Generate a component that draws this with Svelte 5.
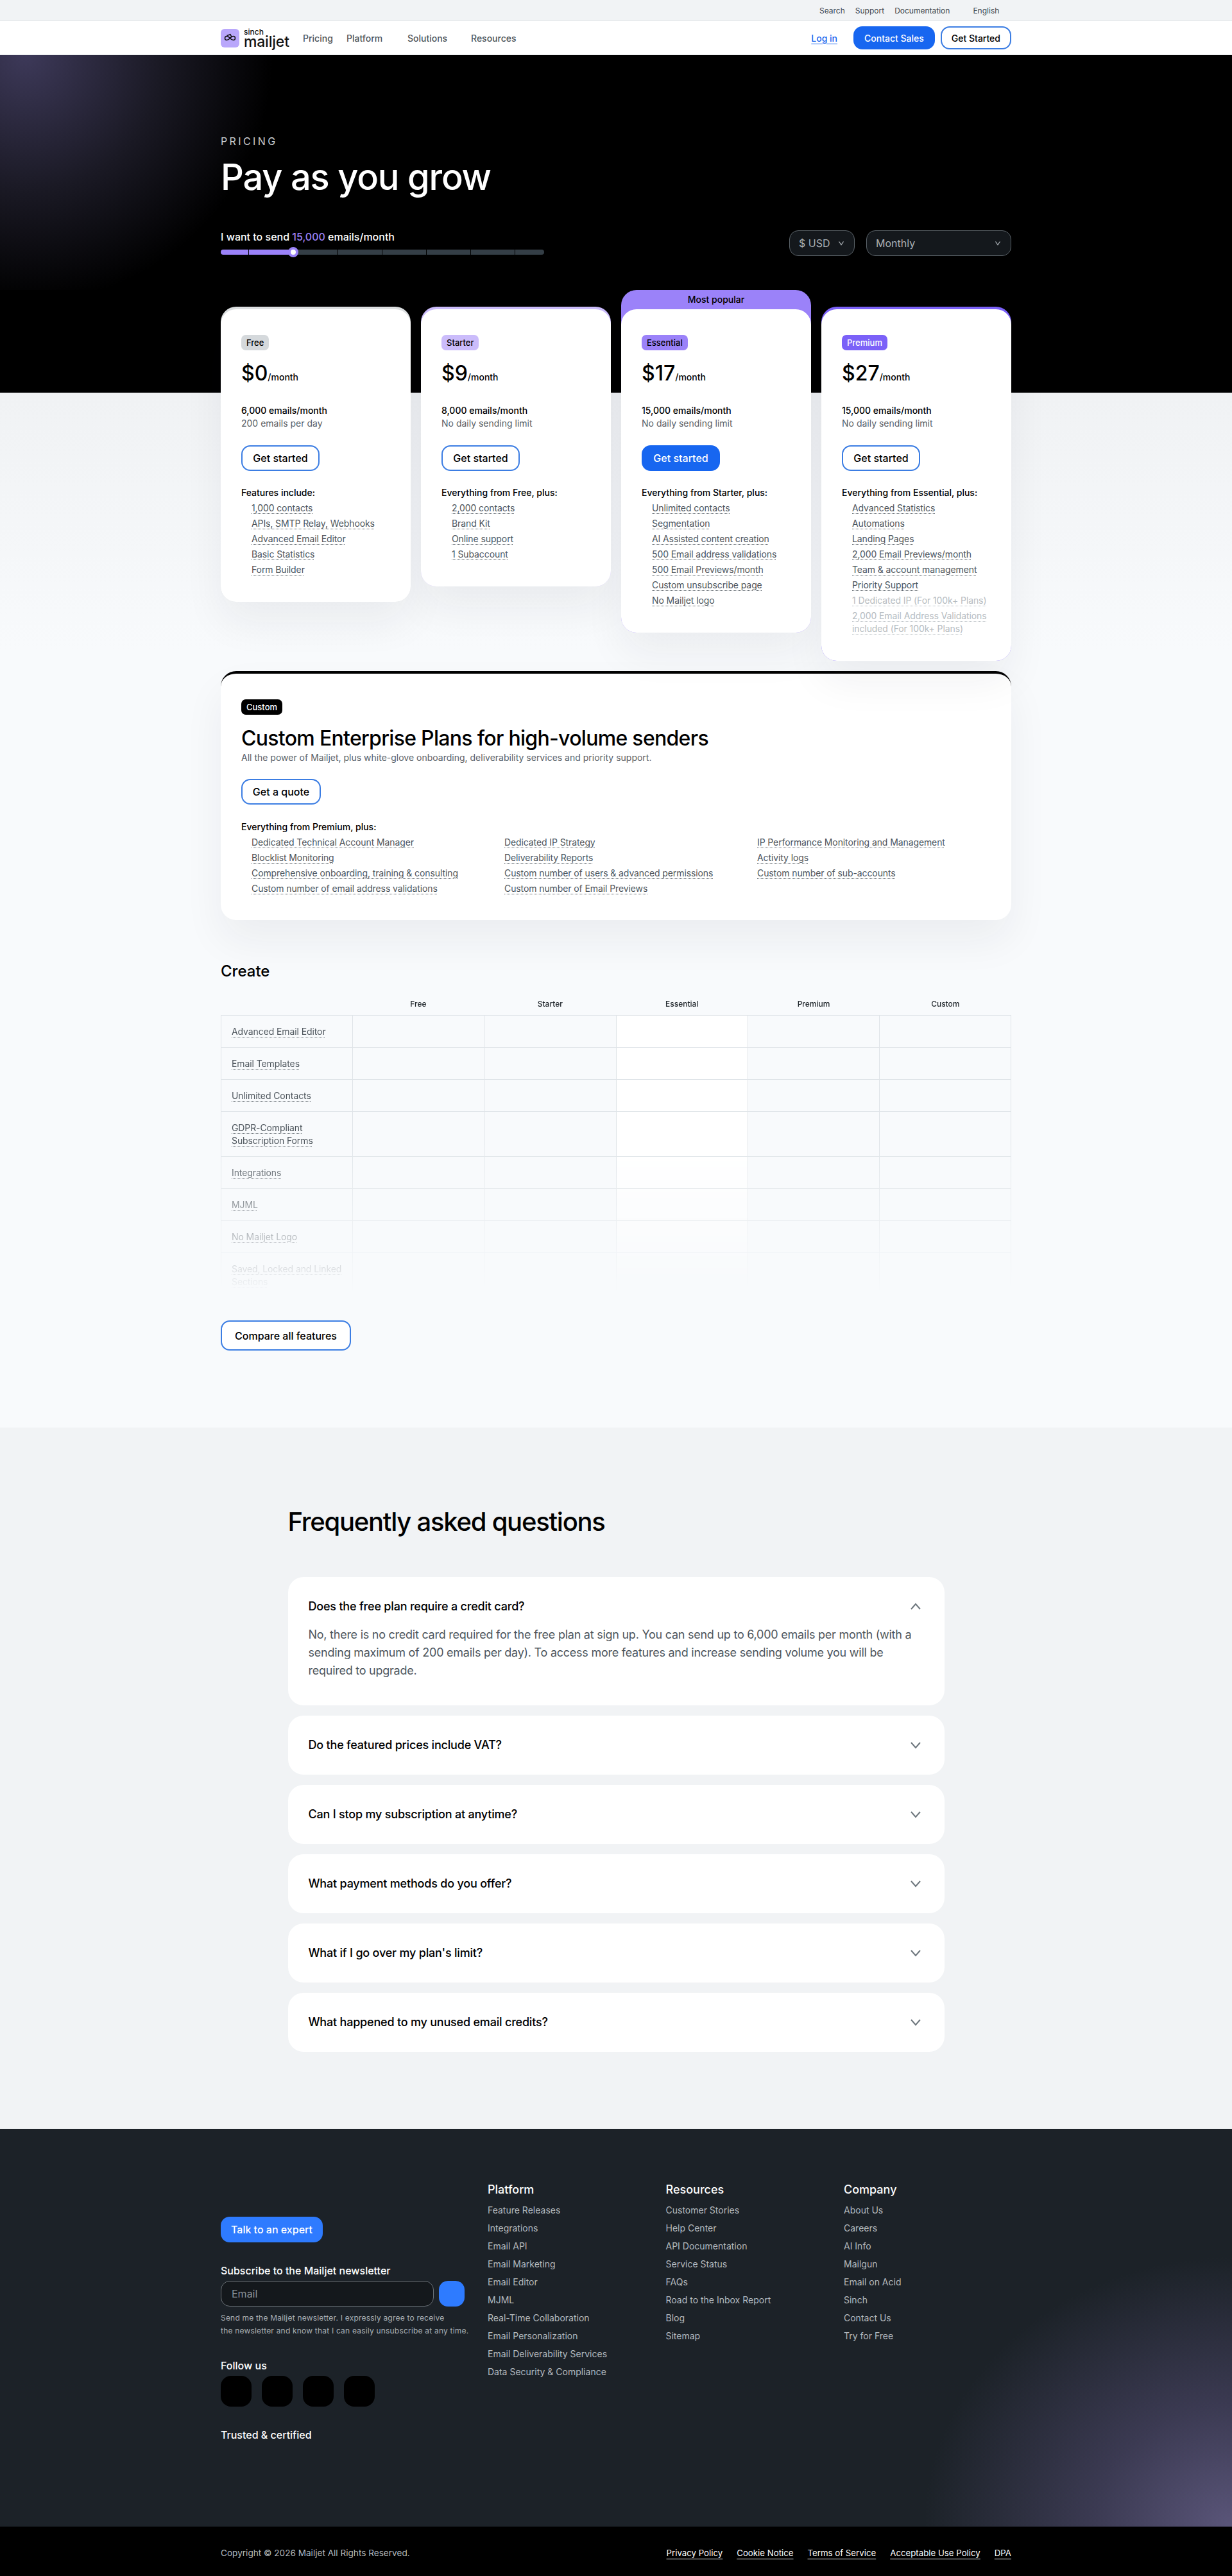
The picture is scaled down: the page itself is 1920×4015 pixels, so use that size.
<script>
  const plans = [
    { name: 'Free', tone: 'free', price: '$0', volume: '6,000 emails/month', limit: '200 emails per day', title: 'Features include:', features: ['1,000 contacts', 'APIs, SMTP Relay, Webhooks', 'Advanced Email Editor', 'Basic Statistics', 'Form Builder'] },
    { name: 'Starter', tone: 'starter', price: '$9', volume: '8,000 emails/month', limit: 'No daily sending limit', title: 'Everything from Free, plus:', features: ['2,000 contacts', 'Brand Kit', 'Online support', '1 Subaccount'] },
    { name: 'Essential', tone: 'essential', popular: true, price: '$17', volume: '15,000 emails/month', limit: 'No daily sending limit', title: 'Everything from Starter, plus:', features: ['Unlimited contacts', 'Segmentation', 'AI Assisted content creation', '500 Email address validations', '500 Email Previews/month', 'Custom unsubscribe page', 'No Mailjet logo'] },
    { name: 'Premium', tone: 'premium', price: '$27', volume: '15,000 emails/month', limit: 'No daily sending limit', title: 'Everything from Essential, plus:', features: ['Advanced Statistics', 'Automations', 'Landing Pages', '2,000 Email Previews/month', 'Team & account management', 'Priority Support'], muted: ['1 Dedicated IP (For 100k+ Plans)', '2,000 Email Address Validations included (For 100k+ Plans)'] },
  ];

  const customFeatures = [
    'Dedicated Technical Account Manager', 'Dedicated IP Strategy', 'IP Performance Monitoring and Management',
    'Blocklist Monitoring', 'Deliverability Reports', 'Activity logs',
    'Comprehensive onboarding, training & consulting', 'Custom number of users & advanced permissions', 'Custom number of sub-accounts',
    'Custom number of email address validations', 'Custom number of Email Previews',
  ];

  const tiers = ['Free', 'Starter', 'Essential', 'Premium', 'Custom'];
  const rows = ['Advanced Email Editor', 'Email Templates', 'Unlimited Contacts', 'GDPR-Compliant Subscription Forms', 'Integrations', 'MJML', 'No Mailjet Logo', 'Saved, Locked and Linked Sections'];
  const stops = [44, 69, 69, 70, 69, 69, 69, 45];

  const faqs = [
    { q: 'Does the free plan require a credit card?', a: 'No, there is no credit card required for the free plan at sign up. You can send up to 6,000 emails per month (with a sending maximum of 200 emails per day). To access more features and increase sending volume you will be required to upgrade.' },
    { q: 'Do the featured prices include VAT?' },
    { q: 'Can I stop my subscription at anytime?' },
    { q: 'What payment methods do you offer?' },
    { q: 'What if I go over my plan\'s limit?' },
    { q: 'What happened to my unused email credits?' },
  ];

  const footerColumns = [
    { title: 'Platform', links: ['Feature Releases', 'Integrations', 'Email API', 'Email Marketing', 'Email Editor', 'MJML', 'Real-Time Collaboration', 'Email Personalization', 'Email Deliverability Services', 'Data Security & Compliance'] },
    { title: 'Resources', links: ['Customer Stories', 'Help Center', 'API Documentation', 'Service Status', 'FAQs', 'Road to the Inbox Report', 'Blog', 'Sitemap'] },
    { title: 'Company', links: ['About Us', 'Careers', 'AI Info', 'Mailgun', 'Email on Acid', 'Sinch', 'Contact Us', 'Try for Free'] },
  ];

  const legal = ['Privacy Policy', 'Cookie Notice', 'Terms of Service', 'Acceptable Use Policy', 'DPA'];
</script>

<div class="topbar">
  <a href="#search">Search</a>
  <a href="#support">Support</a>
  <a href="#docs">Documentation</a>
  <a class="lang" href="#lang">English</a>
</div>

<nav class="nav">
  <a class="logo" href="#home">
    <svg class="mark" width="29" height="29" viewBox="0 0 29 29">
      <rect width="29" height="29" rx="6" fill="#b9a7fb"/>
      <path d="M14.5 14.5c-1.800-2.100-3.300-3-5-3a3 3 0 0 0 0 6c1.700 0 3.200-.9 5-3s3.300-3 5-3a3 3 0 0 1 0 6c-1.700 0-3.200-.9-5-3z" fill="none" stroke="#111" stroke-width="1.500"/>
      <path d="M9.500 10.500l5.500-1.800 2 4" fill="none" stroke="#111" stroke-width="1.500"/>
    </svg>
    <span class="wordmark"><small>sinch</small><b>mailjet</b></span>
  </a>
  <div class="nav-links">
    <a href="#pricing" style="width:68px">Pricing</a>
    <a href="#platform" style="width:95px">Platform</a>
    <a href="#solutions" style="width:99px">Solutions</a>
    <a href="#resources">Resources</a>
  </div>
  <div class="nav-actions">
    <a class="login" href="#login">Log in</a>
    <a class="btn solid nav-btn" href="#sales">Contact Sales</a>
    <a class="btn nav-btn" href="#start">Get Started</a>
  </div>
</nav>

<header class="hero">
  <p class="eyebrow">PRICING</p>
  <h1>Pay as you grow</h1>
  <div class="controls">
    <div class="volume">
      <p>I want to send <em>15,000</em> emails/month</p>
      <div class="track">
        {#each stops as w, i}
          <span class:on={i < 2} style="width:{w}px"></span>
        {/each}
        <i class="thumb"></i>
      </div>
    </div>
    <div class="selects">
      <div class="select currency">
        <span>$ USD</span>
        <svg width="12" height="12" viewBox="0 0 12 12"><path d="M2.500 3.500l3.500 5 3.500-5" fill="none" stroke="#aab0b5" stroke-width="1.300"/></svg>
      </div>
      <div class="select period">
        <span>Monthly</span>
        <svg width="12" height="12" viewBox="0 0 12 12"><path d="M2.500 3.500l3.500 5 3.500-5" fill="none" stroke="#aab0b5" stroke-width="1.300"/></svg>
      </div>
    </div>
  </div>
</header>

<main class="plans-section">
  <div class="plans">
    {#each plans as plan}
      <article class="plan {plan.tone}">
        {#if plan.popular}<div class="popular">Most popular</div>{/if}
        <div class="plan-body">
          <span class="badge">{plan.name}</span>
          <p class="price">{plan.price}<small>/month</small></p>
          <p class="volume-line">{plan.volume}</p>
          <p class="limit">{plan.limit}</p>
          <a class="btn plan-btn" class:solid={plan.popular} href="#start">Get started</a>
          <p class="feat-title">{plan.title}</p>
          <ul class="feats">
            {#each plan.features as f}
              <li><span>{f}</span></li>
            {/each}
            {#each plan.muted ?? [] as f}
              <li class="faded"><span>{f}</span></li>
            {/each}
          </ul>
        </div>
      </article>
    {/each}
  </div>

  <section class="custom">
    <span class="badge black">Custom</span>
    <h2>Custom Enterprise Plans for high-volume senders</h2>
    <p class="limit">All the power of Mailjet, plus white-glove onboarding, deliverability services and priority support.</p>
    <a class="btn quote" href="#quote">Get a quote</a>
    <p class="feat-title custom-title">Everything from Premium, plus:</p>
    <ul class="feats custom-feats">
      {#each customFeatures as f}
        <li><span>{f}</span></li>
      {/each}
    </ul>
  </section>

  <section class="compare">
    <h3>Create</h3>
    <div class="table">
      <div class="row head">
        <div></div>
        {#each tiers as t}<div>{t}</div>{/each}
      </div>
      {#each rows as r}
        <div class="row">
          <div class="label"><span>{r}</span></div>
          {#each tiers as t}<div class="cell" class:hl={t === 'Essential'}></div>{/each}
        </div>
      {/each}
    </div>
    <a class="btn compare-btn" href="#compare">Compare all features</a>
  </section>
</main>

<section class="faq">
  <h2>Frequently asked questions</h2>
  {#each faqs as item}
    <div class="faq-item">
      <div class="faq-q">
        <span>{item.q}</span>
        <svg class:up={item.a} width="18" height="12" viewBox="0 0 18 12"><path d="M2 2l7 8 7-8" fill="none" stroke="#6d767d" stroke-width="2"/></svg>
      </div>
      {#if item.a}<p class="faq-a">{item.a}</p>{/if}
    </div>
  {/each}
</section>

<footer class="footer">
  <div class="foot-left">
    <a class="btn solid talk" href="#expert">Talk to an expert</a>
    <h4>Subscribe to the Mailjet newsletter</h4>
    <div class="subscribe">
      <input type="text" placeholder="Email" />
      <button aria-label="Subscribe"></button>
    </div>
    <p class="note">Send me the Mailjet newsletter. I expressly agree to receive<br />the newsletter and know that I can easily unsubscribe at any time.</p>
    <h4 class="gap">Follow us</h4>
    <div class="socials">
      <span></span><span></span><span></span><span></span>
    </div>
    <h4 class="gap">Trusted &amp; certified</h4>
  </div>
  {#each footerColumns as col}
    <div class="foot-col">
      <h5>{col.title}</h5>
      {#each col.links as l}<a href="#link">{l}</a>{/each}
    </div>
  {/each}
</footer>

<div class="legal">
  <span class="copy">Copyright © 2026 Mailjet All Rights Reserved.</span>
  <div class="legal-links">
    {#each legal as l}<a href="#legal">{l}</a>{/each}
  </div>
</div>

<style>
  :global(body) {
    margin: 0;
    font-family: Inter, "Liberation Sans", sans-serif;
    color: #000;
    background: #f8fafc;
  }

  a {
    color: inherit;
    text-decoration: none;
  }

  p, h1, h2, h3, h4, h5, ul {
    margin: 0;
    padding: 0;
    font-weight: 500;
  }

  ul {
    list-style: none;
  }

  .topbar {
    height: 32px;
    background: #f1f3f5;
    border-bottom: 1px solid #dfe3e6;
    display: flex;
    align-items: center;
    padding-left: 1277px;
    font-size: 12px;
    color: #3f474d;
    gap: 16px;
  }

  .topbar .lang {
    margin-left: 20px;
  }

  .nav {
    height: 52px;
    background: #fff;
    border-bottom: 1px solid #dfe3e6;
    display: flex;
    align-items: center;
    padding: 0 344px;
  }

  .logo {
    display: flex;
    align-items: center;
    gap: 7px;
    width: 128px;
  }

  .wordmark {
    display: flex;
    flex-direction: column;
    line-height: 1;
    color: #111;
  }

  .wordmark small {
    font-size: 12px;
    font-weight: 500;
    line-height: 11px;
  }

  .wordmark b {
    font-size: 23px;
    font-weight: 500;
    line-height: 20px;
    letter-spacing: -0.2px;
  }

  .nav-links {
    display: flex;
    font-size: 14px;
    font-weight: 500;
    color: #4d555b;
  }

  .nav-actions {
    margin-left: auto;
    display: flex;
    align-items: center;
    gap: 9px;
  }

  .login {
    color: #1a66ee;
    font-size: 14px;
    font-weight: 500;
    text-decoration: underline;
    text-underline-offset: 3px;
    margin-right: 16px;
  }

  .btn {
    display: inline-flex;
    align-items: center;
    justify-content: center;
    box-sizing: border-box;
    height: 40px;
    border: 2px solid #3b7de3;
    border-radius: 14px;
    background: #fff;
    font-size: 16px;
    font-weight: 500;
    white-space: nowrap;
  }

  .btn.solid {
    background: #1766f0;
    border-color: #1766f0;
    color: #fff;
  }

  .nav-btn {
    height: 36px;
    font-size: 14px;
    border-radius: 14px;
    padding: 0 15px;
  }

  .hero {
    box-sizing: border-box;
    height: 526px;
    background: radial-gradient(circle 385px at 40px 0, #3d3959 0%, #1a1924 55%, #000 100%) no-repeat 0 0 / 100% 366px #000;
    padding: 122px 344px 0;
    color: #fff;
  }

  .eyebrow {
    font-size: 16px;
    font-weight: 400;
    line-height: 24px;
    letter-spacing: 3.400px;
    color: #c8ccd0;
  }

  h1 {
    font-size: 56px;
    font-weight: 500;
    line-height: 64px;
    margin-top: 12px;
    letter-spacing: -1.200px;
  }

  .controls {
    display: flex;
    justify-content: space-between;
    align-items: flex-start;
    margin-top: 49px;
  }

  .volume p {
    font-size: 16px;
    line-height: 24px;
  }

  .volume em {
    font-style: normal;
    color: #9b82f9;
  }

  .track {
    position: relative;
    display: flex;
    width: 504px;
    height: 8px;
    margin-top: 8px;
    border-radius: 4px;
    overflow: visible;
    gap: 0;
  }

  .track span {
    box-sizing: border-box;
    height: 8px;
    background: #343e46;
    border-right: 1px solid #000;
  }

  .track span.on {
    background: #9b82f9;
  }

  .track span:first-child {
    border-radius: 4px 0 0 4px;
  }

  .track span:last-of-type {
    border-radius: 0 4px 4px 0;
    border-right: 0;
  }

  .thumb {
    position: absolute;
    left: 105px;
    top: -4px;
    width: 8px;
    height: 8px;
    border: 4px solid #9b82f9;
    border-radius: 50%;
    background: #fff;
  }

  .selects {
    display: flex;
    gap: 18px;
    margin-top: 2px;
  }

  .select {
    box-sizing: border-box;
    height: 40px;
    display: flex;
    align-items: center;
    justify-content: space-between;
    padding: 0 14px;
    background: #14181c;
    border: 1px solid #5a6268;
    border-radius: 14px;
    color: #aab0b5;
    font-size: 16px;
  }

  .currency {
    width: 102px;
  }

  .period {
    width: 226px;
  }

  .plans-section {
    display: flow-root;
    background: linear-gradient(#f0f2f4 0, #f8fafc 400px) no-repeat #f8fafc;
    padding: 0 344px 120px;
  }

  .plans {
    display: grid;
    grid-template-columns: repeat(4, 296px);
    gap: 16px;
    align-items: start;
    margin-top: -160px;
    position: relative;
  }

  .plan {
    margin-top: 26px;
    border-radius: 24px;
    box-shadow: 0 32px 64px rgba(30, 40, 50, 0.06);
    background: var(--tone);
    --tone: #dcdfe1;
    --badge: #d5d9dc;
    --ink: #000;
  }

  .starter {
    --tone: #cbbcfb;
    --badge: #cbbcfb;
  }

  .essential {
    --tone: #9b82f9;
    --badge: #9b82f9;
    margin-top: 0;
  }

  .premium {
    --tone: #7b61f8;
    --badge: #7b61f8;
    --ink: #fff;
  }

  .popular {
    height: 30px;
    text-align: center;
    font-size: 14px;
    font-weight: 500;
    line-height: 30px;
  }

  .plan-body {
    background: #fff;
    border-radius: 24px;
    margin-top: 4px;
    padding: 40px 32px;
    position: relative;
  }

  .essential .plan-body {
    margin-top: 0;
  }

  .badge {
    display: block;
    width: fit-content;
    height: 24px;
    line-height: 24px;
    padding: 0 8px;
    border-radius: 7px;
    font-size: 13px;
    font-weight: 500;
    background: var(--badge);
    color: var(--ink);
  }

  .badge.black {
    background: #000;
    color: #fff;
  }

  .price {
    font-size: 32px;
    line-height: 40px;
    margin-top: 16px;
    font-weight: 500;
  }

  .price small {
    font-size: 14px;
    font-weight: 500;
    line-height: 1;
  }

  .volume-line {
    font-size: 14px;
    line-height: 20px;
    margin-top: 28px;
  }

  .limit {
    font-size: 14px;
    line-height: 20px;
    font-weight: 400;
    color: #596168;
  }

  .plan-btn {
    width: 122px;
    margin-top: 24px;
  }

  .feat-title {
    font-size: 14px;
    line-height: 20px;
    margin-top: 24px;
  }

  .feats {
    margin-top: 4px;
    padding-left: 16px;
    font-size: 14px;
    line-height: 20px;
    letter-spacing: -0.1px;
    color: #4d555c;
    display: flex;
    flex-direction: column;
    gap: 4px;
    font-weight: 400;
  }

  .feats li {
    font-weight: 400;
  }

  .feats span,
  .label span {
    text-decoration: underline dotted #596168 1px;
    text-underline-offset: 3px;
  }

  .feats .faded {
    color: #b6bcc1;
  }

  .feats .faded span {
    text-decoration-color: #b6bcc1;
  }

  .custom {
    margin-top: 16px;
    background: #fff;
    border-top: 4px solid #000;
    border-radius: 24px;
    padding: 40px 32px 39px;
    box-shadow: 0 32px 64px rgba(30, 40, 50, 0.06);
  }

  .custom h2 {
    font-size: 32px;
    line-height: 40px;
    margin-top: 17px;
    letter-spacing: -0.700px;
  }

  .quote {
    width: 124px;
    margin-top: 23px;
  }

  .custom-title {
    margin-top: 25px;
  }

  .custom-feats {
    display: grid;
    grid-template-columns: repeat(3, 394px);
    row-gap: 4px;
    column-gap: 0;
  }

  .compare {
    margin-top: 64px;
  }

  .compare h3 {
    font-size: 24px;
    line-height: 32px;
  }

  .table {
    margin-top: 16px;
    height: 469px;
    overflow: hidden;
    mask-image: linear-gradient(#000 50%, transparent 100%);
    -webkit-mask-image: linear-gradient(#000 50%, transparent 100%);
  }

  .row {
    display: grid;
    grid-template-columns: repeat(6, 1fr);
    border-bottom: 1px solid #dfe4e8;
    border-left: 1px solid #dfe4e8;
  }

  .row.head {
    height: 36px;
    border-left: 0;
    font-size: 12px;
    font-weight: 500;
    text-align: center;
    align-items: center;
    color: #23292e;
  }

  .label {
    padding: 14.500px 12px 14.500px 16px;
    font-size: 14px;
    line-height: 20px;
    letter-spacing: -0.1px;
    color: #4d555c;
    border-right: 1px solid #dfe4e8;
  }

  .cell {
    border-right: 1px solid #dfe4e8;
  }

  .cell.hl {
    background: #fff;
  }

  .compare-btn {
    width: 203px;
    height: 47px;
    margin-top: 43px;
  }

  .faq {
    background: #f1f3f5;
    padding: 123px 448.500px 120px;
  }

  .faq h2 {
    font-size: 40px;
    line-height: 48px;
    margin-bottom: 62px;
    letter-spacing: -1.250px;
  }

  .faq-item {
    background: #fff;
    border-radius: 24px;
    padding: 32px;
    margin-top: 16px;
  }

  .faq-item:has(.faq-a) {
    padding-bottom: 40px;
  }

  .faq-q {
    display: flex;
    justify-content: space-between;
    align-items: center;
    font-size: 18px;
    line-height: 28px;
    font-weight: 500;
    padding-right: 4px;
    letter-spacing: -0.2px;
  }

  .faq-q svg.up {
    transform: rotate(180deg);
  }

  .faq-a {
    font-size: 18px;
    line-height: 28px;
    font-weight: 400;
    color: #4d555c;
    margin-top: 16px;
    max-width: 950px;
    letter-spacing: -0.250px;
  }

  .footer {
    box-sizing: border-box;
    height: 620px;
    background: radial-gradient(ellipse 480px 420px at 100% 100%, #5a5579 0%, #3b3a52 45%, #1c2228 100%) no-repeat #1c2228;
    padding: 83px 0 0 344px;
    display: flex;
    color: #fff;
  }

  .foot-left {
    width: 416px;
    padding-top: 54px;
  }

  .talk {
    width: 159px;
    background: #2e7bff !important;
    border-color: #2e7bff !important;
  }

  .footer h4 {
    font-size: 16px;
    line-height: 24px;
    margin-top: 32px;
  }

  .subscribe {
    display: flex;
    gap: 8px;
    margin-top: 4px;
    width: 380px;
  }

  .subscribe input {
    box-sizing: border-box;
    width: 332px;
    height: 40px;
    padding: 0 16px;
    background: #14181c;
    border: 1px solid #6b7278;
    border-radius: 14px;
    font: inherit;
    font-size: 16px;
    color: #fff;
  }

  .subscribe input::placeholder {
    color: #8b9298;
  }

  .subscribe button {
    width: 40px;
    height: 40px;
    border: 0;
    border-radius: 14px;
    background: #2e7bff;
  }

  .note {
    width: 400px;
    margin-top: 8px;
    font-size: 12px;
    line-height: 20px;
    font-weight: 400;
    letter-spacing: 0.2px;
    color: #aab0b5;
  }

  .socials {
    display: flex;
    gap: 16px;
    margin-top: 4px;
  }

  .socials span {
    width: 48px;
    height: 48px;
    border-radius: 16px;
    background: #000;
  }

  .foot-col {
    width: 277.500px;
    display: flex;
    flex-direction: column;
    font-size: 14px;
    line-height: 28px;
    color: #b4babf;
  }

  .foot-col h5 {
    font-size: 18px;
    line-height: 24px;
    color: #fff;
    margin-bottom: 6px;
  }

  .legal {
    box-sizing: border-box;
    height: 77px;
    background: #000;
    padding: 0 344px;
    display: flex;
    justify-content: space-between;
    align-items: center;
    padding-top: 4px;
  }

  .copy {
    color: #b4babf;
    font-size: 13.600px;
  }

  .legal-links {
    display: flex;
    gap: 22px;
    color: #fff;
    font-size: 13.250px;
  }

  .legal-links a {
    text-decoration: underline;
    text-decoration-thickness: 1px;
    text-underline-offset: 4px;
  }
</style>
